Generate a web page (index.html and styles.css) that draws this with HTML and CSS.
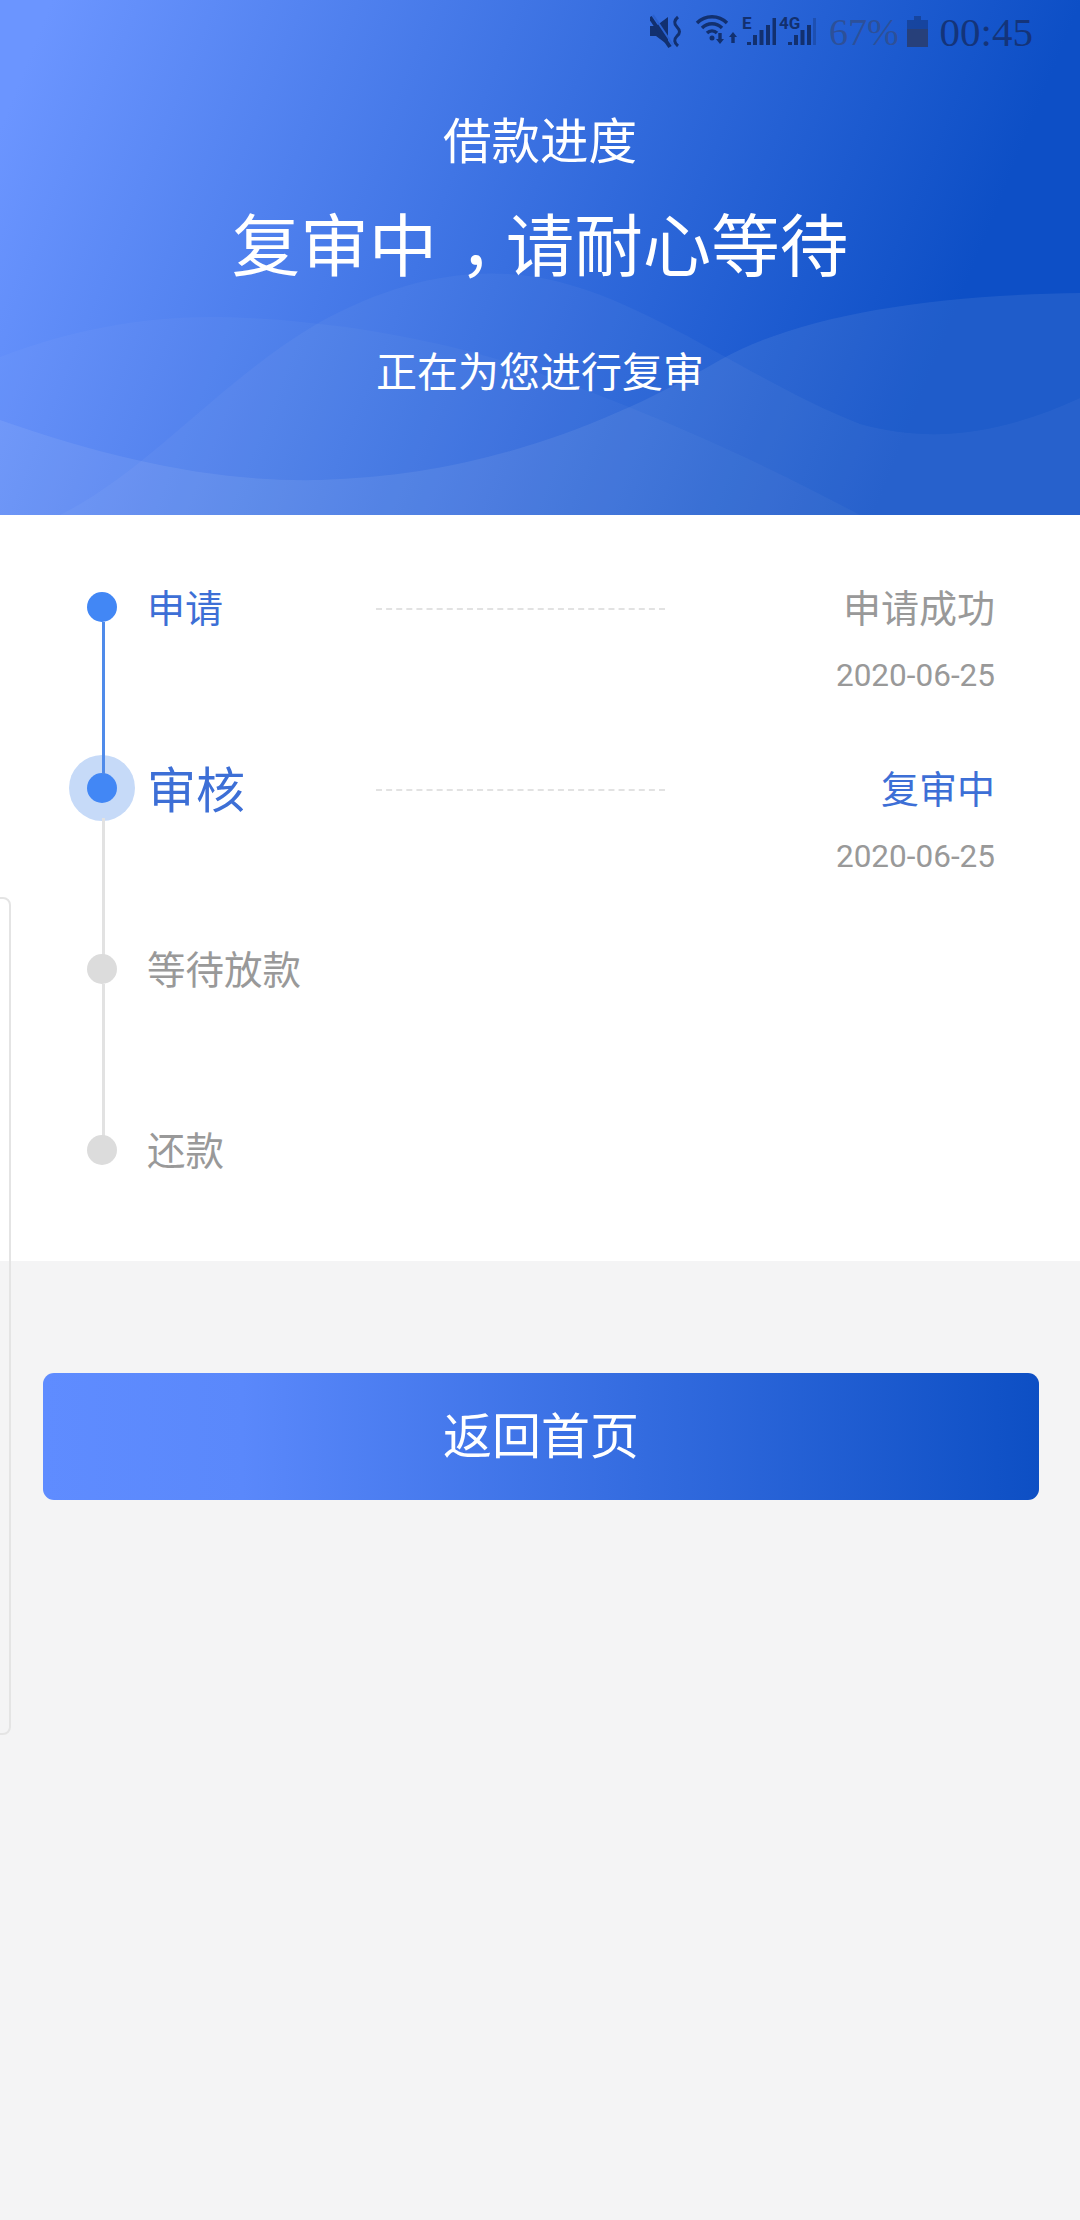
FILE: index.html
```html
<!DOCTYPE html>
<html lang="zh-CN">
<head>
    <meta charset="UTF-8">
    <meta name="viewport" content="width=device-width, initial-scale=1.0">
    <title>借款进度</title>
    <link rel="stylesheet" href="styles.css">
</head>
<body>
    <header class="hero">
        <svg class="waves" viewBox="0 0 1080 515" preserveAspectRatio="none" aria-hidden="true">
            <path d="M60 515C150 470 220 380 320 322C400 278 480 262 560 282C660 308 750 380 860 424C940 446 1010 430 1080 398V515Z" fill="#fff" fill-opacity="0.04"/>
            <path d="M0 357C70 330 140 317 210 317C290 317 400 330 500 360C600 392 740 450 860 515H0Z" fill="#fff" fill-opacity="0.03"/>
            <path d="M0 420C120 462 220 482 320 480C470 476 600 430 720 360C800 315 930 295 1080 293V515H0Z" fill="#fff" fill-opacity="0.075"/>
        </svg>

        <div class="status-bar">
            <svg class="ic-mute" viewBox="0 0 32 36" aria-hidden="true">
                <path d="M0 12h6L18 3v28L6 22H0z" fill="#12306f"/>
                <path d="M3 1l20 30" stroke="#2b62cf" stroke-width="2"/>
                <path d="M0 3l20 30" stroke="#12306f" stroke-width="4"/>
                <path d="M28 3q-6 5-1 10t0 9q-5 5 1 10" fill="none" stroke="#12306f" stroke-width="3"/>
            </svg>
            <svg class="ic-wifi" viewBox="0 0 42 36" aria-hidden="true">
                <g fill="none" stroke="#12306f" stroke-width="3.4">
                    <path d="M2 9A21 21 0 0 1 32 9"/>
                    <path d="M7 14A14 14 0 0 1 27 14"/>
                    <path d="M12 19A7 7 0 0 1 22 19"/>
                    <path d="M25 19v8M38 29v-8"/>
                </g>
                <circle cx="17" cy="24" r="2.5" fill="#12306f"/>
                <path d="M21 25h8l-4 5zM34 23h8l-4-5z" fill="#12306f"/>
            </svg>
            <svg class="ic-sig" viewBox="0 0 34 36" aria-hidden="true">
                <text x="0" y="15" class="net-label">E</text>
                <path d="M5 28h4v3H5zM11 21h4v10h-4zM17.500 16h4v15h-4zM24 11h4v20h-4zM30.500 4h3.500v27h-3.500z" fill="#12306f"/>
            </svg>
            <svg class="ic-sig-4g" viewBox="0 0 37 36" aria-hidden="true">
                <text x="0" y="15" class="net-label">4G</text>
                <path d="M9 28h4v3H9zM15 21h4v10h-4zM21.500 16h4v15h-4zM28 11h4v20h-4z" fill="#12306f"/>
                <path d="M34 4h3v27h-3z" fill="#12306f" fill-opacity="0.35"/>
            </svg>
            <span class="battery-pct">67%</span>
            <svg class="ic-battery" viewBox="0 0 21 36" aria-hidden="true">
                <path d="M7 2h7v4H7zM0 6h21v9H0z" fill="#12306f" fill-opacity="0.5"/>
                <path d="M0 15h21v18H0z" fill="#27407a"/>
            </svg>
            <span class="clock">00:45</span>
        </div>

        <p class="hero-title">借款进度</p>
        <h1 class="hero-head">复审中<span class="comma">，</span>请耐心等待</h1>
        <p class="hero-sub">正在为您进行复审</p>
    </header>

    <section class="steps">
        <div class="step step-done">
            <span class="node"></span>
            <span class="step-name">申请</span>
            <span class="dash"></span>
            <div class="step-info">
                <p class="info-state">申请成功</p>
                <p class="info-date">2020-06-25</p>
            </div>
        </div>
        <div class="step step-current">
            <span class="node"></span>
            <span class="step-name">审核</span>
            <span class="dash"></span>
            <div class="step-info">
                <p class="info-state">复审中</p>
                <p class="info-date">2020-06-25</p>
            </div>
        </div>
        <div class="step step-todo">
            <span class="node"></span>
            <span class="step-name">等待放款</span>
        </div>
        <div class="step step-last">
            <span class="node"></span>
            <span class="step-name">还款</span>
        </div>
    </section>

    <button type="button" class="home-btn">返回首页</button>

    <!-- edge panel handle from the system -->
    <div class="edge-handle"></div>
</body>
</html>
```

FILE: styles.css
```css
* {
    box-sizing: border-box;
}

html, body {
    margin: 0;
    padding: 0;
}

body {
    position: relative;
    height: 2220px;
    overflow: hidden;
    background-color: #f4f4f5;
    font-family: Roboto, "Noto Sans CJK SC", sans-serif;
    color: #999;
}

p, h1 {
    margin: 0;
    font-weight: 400;
}

/* top blue block */
.hero {
    position: relative;
    height: 515px;
    text-align: center;
    color: #fff;
    background: linear-gradient(112deg, #6b95ff 4%, #0d4fc6 84%);
    overflow: hidden;
}

.waves {
    position: absolute;
    left: 0;
    top: 0;
    width: 1080px;
    height: 515px;
}

.status-bar {
    position: relative;
    display: flex;
    justify-content: flex-end;
    align-items: center;
    height: 64px;
    padding-right: 47px;
    color: #14347a;
}

.ic-mute { width: 32px; height: 36px; margin-right: 13px; }
.ic-wifi { width: 42px; height: 36px; margin-right: 5px; }
.ic-sig { width: 34px; height: 36px; margin-right: 3px; }
.ic-sig-4g { width: 37px; height: 36px; margin-right: 13px; }
.ic-battery { width: 21px; height: 36px; margin: 0 12px 0 8px; }

.net-label {
    font-family: Roboto, sans-serif;
    font-size: 17px;
    font-weight: 700;
    fill: #12306f;
}

.battery-pct,
.clock {
    font-family: "Liberation Serif", serif;
    line-height: 44px;
}

.battery-pct {
    font-size: 38px;
    color: #2d5099;
}

.clock {
    font-size: 41px;
}

.hero-title {
    position: relative;
    margin-top: 49px;
    font-size: 48.5px;
    line-height: 60px;
}

.hero-head {
    position: relative;
    margin-top: 35px;
    font-size: 68.5px;
    line-height: 80px;
}

.comma {
    margin-left: 0.32em;
    letter-spacing: -0.32em;
}

.hero-sub {
    position: relative;
    margin-top: 60px;
    font-size: 41px;
    line-height: 50px;
}

/* timeline */
.steps {
    height: 746px;
    padding-top: 77px;
    background-color: #fff;
}

.step {
    display: flex;
    align-items: flex-start;
    height: 181px;
    padding: 0 85px 0 87px;
}

.node {
    position: relative;
    flex: none;
    width: 30px;
    height: 30px;
    margin-right: 30px;
    border-radius: 50%;
    background-color: #4287f5;
}

.node::after {
    content: "";
    position: absolute;
    left: 15px;
    top: 30px;
    width: 3px;
    height: 152px;
    background-color: #4f8bea;
}

/* blue line runs over the halo of the next step */
.step-done .node {
    z-index: 1;
}

.step-current .node {
    box-shadow: 0 0 0 18px #c6daf8;
}

.step-current .node::after {
    top: 45px;
    height: 137px;
    background-color: #e2e2e2;
}

.step-todo .node,
.step-last .node {
    background-color: #dcdcdc;
}

.step-todo .node::after {
    height: 153px;
    background-color: #e2e2e2;
}

.step-last .node::after {
    display: none;
}

.step-name {
    flex: none;
    width: 229px;
    font-size: 38.5px;
    line-height: 34px;
    color: #999;
}

.step-done .step-name,
.step-current .step-name {
    color: #3d6fd6;
}

.step-done .step-name {
    font-size: 38px;
}

.step-current .step-name {
    padding-top: 2px;
    font-size: 49px;
}

.dash {
    flex: none;
    width: 289px;
    margin-top: 16px;
    border-top: 2px dashed #e2e2e2;
}

.step-info {
    flex: 1;
    text-align: right;
}

.info-state {
    font-size: 38px;
    line-height: 34px;
}

.step-current .info-state {
    color: #3d6fd6;
}

.info-date {
    margin-top: 32px;
    font-size: 31.5px;
    line-height: 36px;
}

.home-btn {
    display: block;
    width: 996px;
    height: 127px;
    margin: 112px 0 0 43px;
    padding: 0 0 8px;
    border: 0;
    border-radius: 11px;
    font-family: inherit;
    font-size: 49px;
    color: #fff;
    background: linear-gradient(90deg, #5f8cff 0%, #5a88fb 20%, #0d4fc4 100%);
}

.edge-handle {
    position: absolute;
    left: -10px;
    top: 897px;
    width: 21px;
    height: 838px;
    border: 2px solid #e4e4e4;
    border-radius: 8px;
}
```
